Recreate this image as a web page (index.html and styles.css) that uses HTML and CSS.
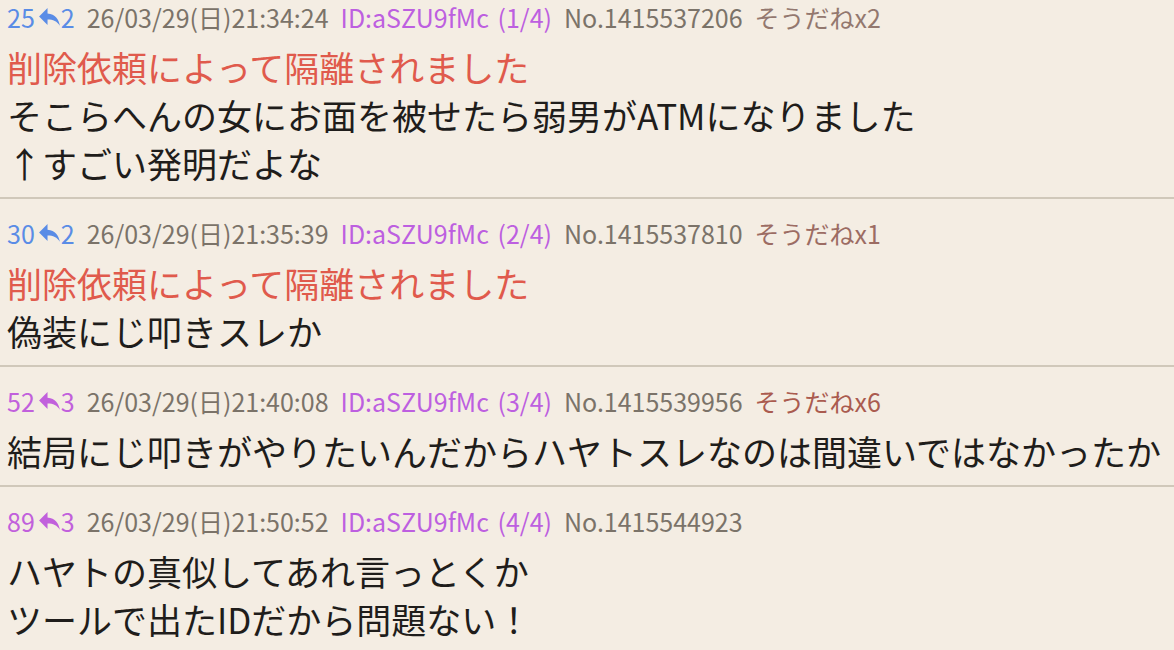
FILE: index.html
```html
<!DOCTYPE html>
<html lang="ja">
<head>
<meta charset="utf-8">
<title>スレ</title>
<link rel="stylesheet" href="styles.css">
</head>
<body>
<div class="thread">
  <article class="post post--first">
    <div class="meta">
      <span class="res res--blue">25<svg class="reply-icon" viewBox="2.5 4 18.5 16"><path d="M10 9V4L2.5 11.5 10 19v-4.8c5 0 8.5 1.6 11 5.6-1-5.4-4-10.2-11-10.8z"/></svg>2</span>
      <span class="date">26/03/29(日)21:34:24</span>
      <span class="id">ID:aSZU9fMc <span class="count">(1/4)</span></span>
      <span class="no">No.1415537206</span>
      <span class="sodane sodane--2">そうだねx2</span>
    </div>
    <div class="body">
      <p class="deleted">削除依頼によって隔離されました</p>
      <p>そこらへんの女にお面を被せたら弱男がATMになりました</p>
      <p>↑すごい発明だよな</p>
    </div>
  </article>
  <article class="post">
    <div class="meta">
      <span class="res res--blue">30<svg class="reply-icon" viewBox="2.5 4 18.5 16"><path d="M10 9V4L2.5 11.5 10 19v-4.8c5 0 8.5 1.6 11 5.6-1-5.4-4-10.2-11-10.8z"/></svg>2</span>
      <span class="date">26/03/29(日)21:35:39</span>
      <span class="id">ID:aSZU9fMc <span class="count">(2/4)</span></span>
      <span class="no">No.1415537810</span>
      <span class="sodane sodane--1">そうだねx1</span>
    </div>
    <div class="body">
      <p class="deleted">削除依頼によって隔離されました</p>
      <p>偽装にじ叩きスレか</p>
    </div>
  </article>
  <article class="post">
    <div class="meta">
      <span class="res res--purple">52<svg class="reply-icon" viewBox="2.5 4 18.5 16"><path d="M10 9V4L2.5 11.5 10 19v-4.8c5 0 8.5 1.6 11 5.6-1-5.4-4-10.2-11-10.8z"/></svg>3</span>
      <span class="date">26/03/29(日)21:40:08</span>
      <span class="id">ID:aSZU9fMc <span class="count">(3/4)</span></span>
      <span class="no">No.1415539956</span>
      <span class="sodane sodane--6">そうだねx6</span>
    </div>
    <div class="body">
      <p>結局にじ叩きがやりたいんだからハヤトスレなのは間違いではなかったか</p>
    </div>
  </article>
  <article class="post post--last">
    <div class="meta">
      <span class="res res--purple">89<svg class="reply-icon" viewBox="2.5 4 18.5 16"><path d="M10 9V4L2.5 11.5 10 19v-4.8c5 0 8.5 1.6 11 5.6-1-5.4-4-10.2-11-10.8z"/></svg>3</span>
      <span class="date">26/03/29(日)21:50:52</span>
      <span class="id">ID:aSZU9fMc <span class="count">(4/4)</span></span>
      <span class="no">No.1415544923</span>
    </div>
    <div class="body">
      <p>ハヤトの真似してあれ言っとくか</p>
      <p>ツールで出たIDだから問題ない！</p>
    </div>
  </article>
</div>
</body>
</html>
```

FILE: styles.css
```css
html, body {
  margin: 0;
  padding: 0;
  background: #f4ede3;
}

body {
  font-family: "Noto Sans CJK JP", "Noto Sans", sans-serif;
  color: #1f1d1b;
  overflow: hidden;
}

.thread {
  display: flex;
  flex-direction: column;
}

.post {
  padding: 20px 0 10px 7px;
  border-bottom: 2px solid #d0c8ba;
}

.post--first {
  padding-top: 3px;
}

.post--last {
  border-bottom: none;
}

.meta {
  display: flex;
  align-items: center;
  gap: 12px;
  font-size: 25px;
  line-height: 28px;
  white-space: nowrap;
  color: #7b7369;
}

.res {
  display: inline-flex;
  align-items: center;
}

.res--blue {
  color: #5a8ce6;
}

.res--purple {
  color: #c160dc;
}

.reply-icon {
  width: 21px;
  height: 18px;
  margin: 0 1px 0 4px;
  fill: currentColor;
}

.id {
  color: #bd5fe0;
}

.count {
  margin-left: 3px;
}

.sodane--2 {
  color: #93786f;
}

.sodane--1 {
  color: #9c6c63;
}

.sodane--6 {
  color: #aa5b4f;
}

.body {
  margin-top: 12px;
  font-size: 35px;
  line-height: 48px;
  white-space: nowrap;
}

.body p {
  margin: 0;
}

.deleted {
  color: #e05a4c;
}
```
